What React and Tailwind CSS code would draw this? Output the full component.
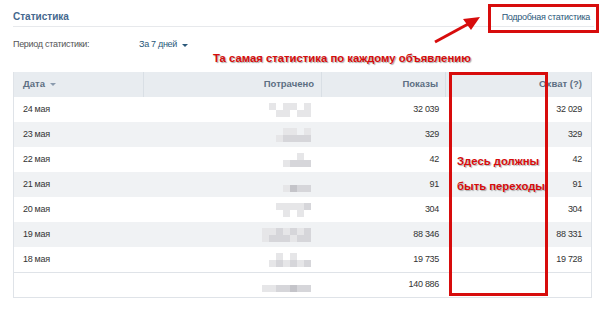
import React from "react";

const rows = [
  { d: "24 мая", p: "32 039", o: "32 029", bg: "bg-white", m: [[0,1,0,1,1,0,1,0],[0,0,1,1,0,1,1,0]] },
  { d: "23 мая", p: "329", o: "329", bg: "bg-[#f0f2f4]", m: [[0,0,0,1,1,0,1,0],[0,0,1,2,2,2,2,0]] },
  { d: "22 мая", p: "42", o: "42", bg: "bg-white", m: [[0,0,0,0,0,1,0,0],[0,0,0,1,2,2,2,0]] },
  { d: "21 мая", p: "91", o: "91", bg: "bg-[#f0f2f4]", m: [[0,0,0,0,0,0,0,0],[0,0,0,1,3,2,2,0]] },
  { d: "20 мая", p: "304", o: "304", bg: "bg-white", m: [[0,0,1,1,1,1,2,0],[0,0,0,1,0,1,0,0]] },
  { d: "19 мая", p: "88 346", o: "88 331", bg: "bg-[#f0f2f4]", m: [[1,1,2,1,2,1,2,0],[1,2,2,2,1,2,2,0]] },
  { d: "18 мая", p: "19 735", o: "19 728", bg: "bg-white", m: [[0,0,1,0,1,0,0,0],[0,1,2,1,2,1,2,0]] },
];

const shade = ["bg-transparent", "bg-[#e6e6e8]", "bg-[#d6d6da]", "bg-[#c4c4c9]"];

function Mosaic({ m }) {
  return (
    <div className="flex flex-col">
      {m.map((r, i) => (
        <div key={i} className="flex">
          {r.map((c, j) => (
            <div key={j} className={`w-[7px] h-[7px] ${shade[c]}`} />
          ))}
        </div>
      ))}
    </div>
  );
}

export default function App() {
  const font = { fontFamily: "'Liberation Sans', Arial, sans-serif" };
  return (
    <div className="relative w-[604px] h-[310px] bg-white overflow-hidden" style={font}>
      <div className="pl-[13px] pr-[10px]">
        <div className="flex justify-between items-end h-[27px] border-b border-[#e7e9ec] pb-[3px]">
          <div className="text-[10px] font-bold text-[#45688e] leading-[12px]">Статистика</div>
          <div className="text-[9px] tracking-[-0.3px] text-[#2b587a] pr-[4px] leading-[12px]">Подробная статистика</div>
        </div>
        <div className="flex items-center h-[36px] text-[9px] tracking-[-0.3px]">
          <div className="w-[126px] text-[#555]">Период статистики:</div>
          <div className="text-[#2b587a] flex items-center gap-[5px]">
            За 7 дней
            <span className="inline-block w-0 h-0 border-l-[3px] border-r-[3px] border-t-[3px] border-l-transparent border-r-transparent border-t-[#2b587a]" />
          </div>
        </div>
        <div className="mt-[9px] w-[579px] border border-t-0 border-[#dfe3e8] text-[9px] tracking-[-0.3px]">
          <div className="grid grid-cols-[130px_178px_124px_1fr] h-[25px] bg-[#e8ecf0] font-bold text-[#5d6f83] text-[9.5px] tracking-[0px]">
            <div className="flex items-center pl-[9px] gap-[5px] border-r border-[#d9dfe5]">
              Дата
              <span className="inline-block w-0 h-0 border-l-[3px] border-r-[3px] border-t-[3px] border-l-transparent border-r-transparent border-t-[#8a9aad]" />
            </div>
            <div className="flex items-center justify-end pr-[7px] border-r border-[#d9dfe5]">Потрачено</div>
            <div className="flex items-center justify-end pr-[7px] border-r border-[#d9dfe5]">Показы</div>
            <div className="flex items-center justify-end pr-[9px]">Охват (?)</div>
          </div>
          {rows.map((r) => (
            <div key={r.d} className={`grid grid-cols-[130px_178px_124px_1fr] h-[25px] ${r.bg} text-[#333]`}>
              <div className="flex items-center pl-[9px]">{r.d}</div>
              <div className="flex items-center justify-end pr-[4px]"><Mosaic m={r.m} /></div>
              <div className="flex items-center justify-end pr-[7px]">{r.p}</div>
              <div className="flex items-center justify-end pr-[9px]">{r.o}</div>
            </div>
          ))}
          <div className="grid grid-cols-[130px_178px_124px_1fr] h-[25px] bg-white text-[#333] border-t border-[#dfe3e8]">
            <div />
            <div className="flex items-center justify-end pr-[4px]"><Mosaic m={[[0,0,0,0,0,0,0,0],[1,1,2,2,3,2,2,0]]} /></div>
            <div className="flex items-center justify-end pr-[7px]">140 886</div>
            <div />
          </div>
        </div>
      </div>

      {/* annotations */}
      <div className="absolute left-[488px] top-[4px] w-[111px] h-[29px] border-[3px] border-[#d70c0c]" />
      <svg className="absolute left-0 top-0" width="604" height="310">
        <line x1="435" y1="42" x2="470" y2="23" stroke="#d70c0c" strokeWidth="3" />
        <polygon points="480,17 463,19 471,30" fill="#d70c0c" />
      </svg>
      <div className="absolute left-[213px] top-[50px] whitespace-nowrap text-[11.3px] font-bold text-[#d70c0c] [text-shadow:1px_1px_1px_rgba(0,0,0,0.35)]">
        Та самая статистика по каждому объявлению
      </div>
      <div className="absolute left-[449px] top-[72px] w-[99px] h-[224px] border-[3px] border-[#d70c0c] flex flex-col pl-[5px] pt-[78px] gap-[9px] whitespace-nowrap text-[11.3px] font-bold text-[#d70c0c] [text-shadow:1px_1px_1px_rgba(0,0,0,0.3)] leading-[16px]">
        <div>Здесь должны</div>
        <div>быть переходы</div>
      </div>
    </div>
  );
}
